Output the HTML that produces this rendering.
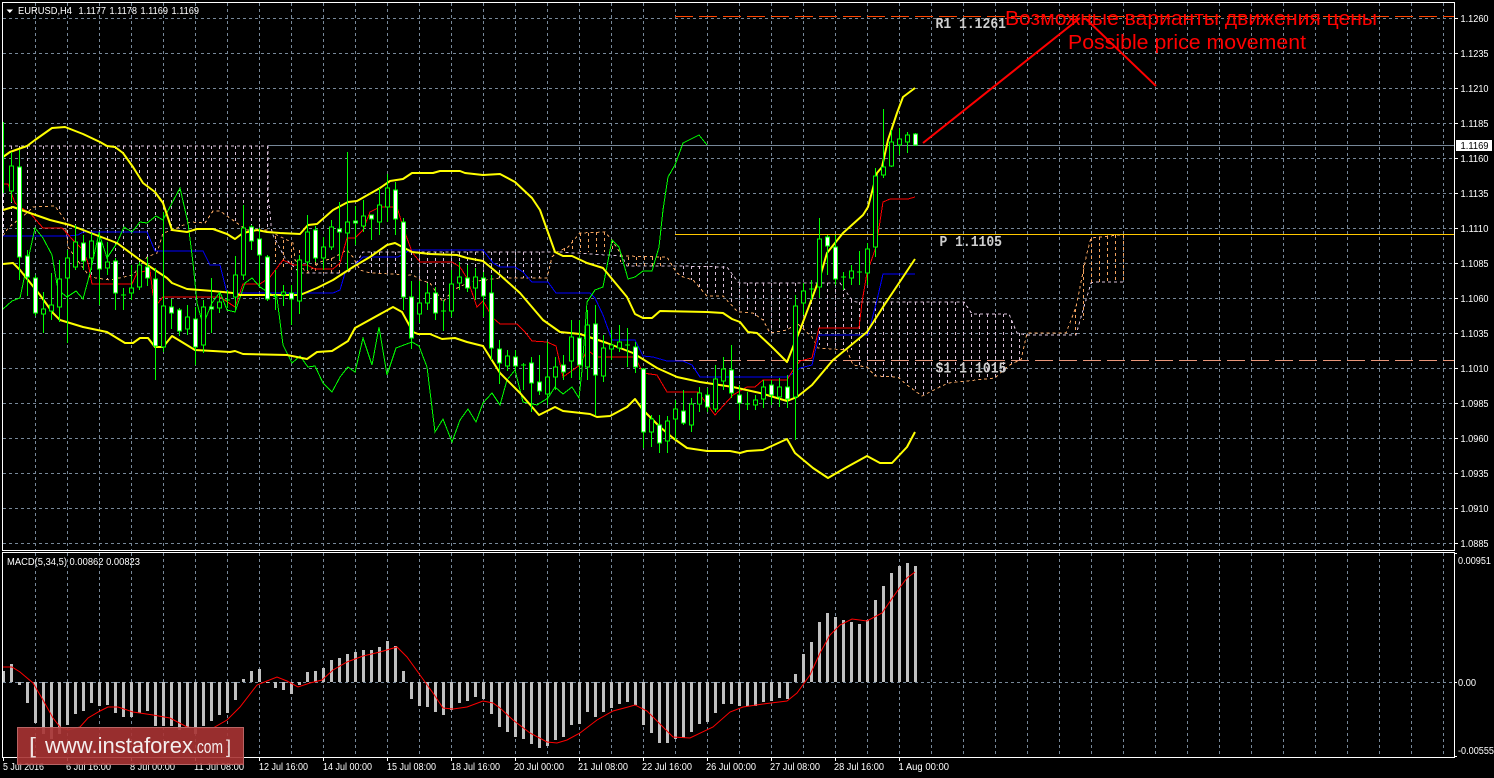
<!DOCTYPE html>
<html lang="en">
<head>
<meta charset="utf-8">
<title>EURUSD,H4</title>
<style>
html,body{margin:0;padding:0;background:#000;width:1494px;height:778px;overflow:hidden}
svg{display:block}
text{font-family:"Liberation Sans",sans-serif;font-size:10px;fill:#fff}
.m{font-family:"Liberation Mono",monospace;font-size:15px;font-weight:bold;fill:#cfcfcf}
.r{font-size:20px;fill:#f00}
.c{shape-rendering:crispEdges;fill:none}
.y{fill:none;stroke:#ff0;stroke-width:2;stroke-linejoin:round}
.t{fill:none;stroke-width:1;shape-rendering:crispEdges}
</style>
</head>
<body>
<svg width="1494" height="778" viewBox="0 0 1494 778" xmlns="http://www.w3.org/2000/svg">
<rect width="1494" height="778" fill="#000"/>

<!-- grid -->
<path class="c" stroke="#778899" stroke-dasharray="3 3" d="M3 18.5H1454M3 53.5H1454M3 88.5H1454M3 123.5H1454M3 158.5H1454M3 193.5H1454M3 228.5H1454M3 263.5H1454M3 298.5H1454M3 333.5H1454M3 368.5H1454M3 403.5H1454M3 438.5H1454M3 473.5H1454M3 508.5H1454M3 543.5H1454M3 682.5H1454"/>
<path class="c" stroke="#778899" stroke-dasharray="3 3" d="M35.5 3V550M67.5 3V550M99.5 3V550M131.5 3V550M163.5 3V550M195.5 3V550M227.5 3V550M259.5 3V550M291.5 3V550M323.5 3V550M355.5 3V550M387.5 3V550M419.5 3V550M451.5 3V550M483.5 3V550M515.5 3V550M547.5 3V550M579.5 3V550M611.5 3V550M643.5 3V550M675.5 3V550M707.5 3V550M739.5 3V550M771.5 3V550M803.5 3V550M835.5 3V550M867.5 3V550M899.5 3V550M931.5 3V550M963.5 3V550M995.5 3V550M1027.5 3V550M1059.5 3V550M1091.5 3V550M1123.5 3V550M1155.5 3V550M1187.5 3V550M1219.5 3V550M1251.5 3V550M1283.5 3V550M1315.5 3V550M1347.5 3V550M1379.5 3V550M1411.5 3V550M1443.5 3V550"/>
<path class="c" stroke="#778899" stroke-dasharray="3 3" d="M35.5 553V757M67.5 553V757M99.5 553V757M131.5 553V757M163.5 553V757M195.5 553V757M227.5 553V757M259.5 553V757M291.5 553V757M323.5 553V757M355.5 553V757M387.5 553V757M419.5 553V757M451.5 553V757M483.5 553V757M515.5 553V757M547.5 553V757M579.5 553V757M611.5 553V757M643.5 553V757M675.5 553V757M707.5 553V757M739.5 553V757M771.5 553V757M803.5 553V757M835.5 553V757M867.5 553V757M899.5 553V757M931.5 553V757M963.5 553V757M995.5 553V757M1027.5 553V757M1059.5 553V757M1091.5 553V757M1123.5 553V757M1155.5 553V757M1187.5 553V757M1219.5 553V757M1251.5 553V757M1283.5 553V757M1315.5 553V757M1347.5 553V757M1379.5 553V757M1411.5 553V757M1443.5 553V757"/>

<!-- bid line -->
<path class="c" stroke="#778899" d="M268 145.5H1454"/>

<!-- ichimoku hatch -->
<path class="c" stroke="#d8bfd8" stroke-dasharray="3 3" d="M3.5 146V236M11.5 146V225M19.5 146V218M27.5 146V213M35.5 146V207M43.5 146V206M51.5 146V206M59.5 146V212M67.5 146V240M75.5 146V257M83.5 146V270M91.5 146V277M99.5 146V279M107.5 146V280M115.5 146V279M123.5 146V278M131.5 146V276M139.5 146V265M147.5 146V257M155.5 146V254M163.5 146V233M171.5 146V230M179.5 146V226M187.5 146V222M195.5 146V222M203.5 146V223M211.5 146V212M219.5 146V211M227.5 146V215M235.5 146V222M243.5 146V227M251.5 146V230M259.5 146V230M267.5 146V230
M371.5 252V273M379.5 252V273M387.5 252V273M395.5 252V274M403.5 252V274M411.5 252V275M419.5 252V280M427.5 252V283M435.5 252V290M443.5 252V302M451.5 252V290M459.5 252V285M467.5 252V283M475.5 252V280M483.5 252V278M491.5 252V278M499.5 252V278M507.5 252V278M515.5 252V278M523.5 252V278M531.5 252V278M539.5 252V278
M683.5 266V277M691.5 266V280M699.5 266V288M707.5 266V296M715.5 266V296M723.5 266V296M731.5 275V305M739.5 283V312M747.5 283V313M755.5 283V316M763.5 283V320M771.5 283V333M779.5 283V331M787.5 283V330M795.5 283V325M803.5 283V330M811.5 283V337M819.5 283V345M827.5 283V349M835.5 283V349M843.5 288V350M851.5 300V350
M859.5 302V366M867.5 302V367M875.5 302V376M883.5 302V377M891.5 302V377M899.5 302V378M907.5 302V385M915.5 302V391M923.5 302V396M931.5 302V391M939.5 302V387M947.5 302V383M955.5 302V381M963.5 302V379M971.5 314V379M979.5 314V378M987.5 314V378M995.5 314V378M1003.5 314V372M1011.5 320V364M1019.5 333V361"/>
<path class="c" stroke="#f4a460" stroke-dasharray="3 3" d="M275.5 236V262M283.5 240V270M291.5 243V273M299.5 250V273M307.5 262V273M315.5 262V273M323.5 260V273M331.5 258V273M339.5 258V273M347.5 250V270M556.5 252V252M564.5 248V252M572.5 240V252M580.5 233V252M588.5 233V252M596.5 232V252M604.5 232V252M612.5 240V252M620.5 254V262M628.5 257V266M636.5 257V266M644.5 257V266M652.5 257V266M660.5 257V266M1075.5 309V335M1083.5 265V320M1091.5 238V283M1099.5 237V282M1107.5 236V282M1115.5 235V282M1123.5 235V282"/>

<!-- senkou B -->
<path class="t" stroke="#d8bfd8" stroke-dasharray="3 3" d="M3 146H268V195L272 233L285 258L300 273H347L353 268L363 252H540L560 252L622 256L627 266H677L727 267L738 282L740 283H840L852 300L856 302H964L972 314H1009L1017 333L1027 335H1076L1083 310L1091 283L1095 282H1123"/>
<!-- senkou A -->
<path class="t" stroke="#f4a460" stroke-dasharray="3 3" d="M3 236L8 228L27 213L33 207L55 206L65 220L68 247L75 257L90 277L110 280L133 275L147 257L157 253L163 233L173 230L190 222L205 223L213 211L220 211L237 223L247 230L267 230L273 233L293 243L295 260L307 273L320 262L333 258L347 250L353 257L360 270L370 273L413 275L420 280L430 283L443 302L453 290L470 282L500 278L547 278L552 257L557 252L568 247L580 233L605 232L612 240L622 256L667 257L673 267L677 273L683 277L693 280L707 296L723 296L738 312L753 313L763 320L770 333L787 330L797 323L812 337L818 348L847 350L853 365L867 367L875 376L898 377L907 385L922 396L948 383L995 378L1007 367L1013 363L1021 360L1027 333L1066 333L1076 307L1087 253L1091 238L1119 235L1123 235"/>

<!-- horizontal pivot lines -->
<path class="c" stroke="#ff4500" stroke-dasharray="18 6" d="M675 16.5H1454"/>
<path class="c" stroke="#ffc800" d="M675 234.5H1454"/>
<path class="c" stroke="#e9967a" stroke-dasharray="18 6" d="M675 360.5H1454"/>

<!-- kijun blue -->
<path class="t" stroke="#0000ff" d="M3 236H68L78 235L83 232H147L155 251H203L210 265H220L227 293H333L340 290L345 273L353 267L363 257H398L410 250H483L493 263L500 267H515L523 272L532 282H548L556 293H590L595 298L603 315L612 340H635L643 356L653 357L667 361H683L692 365L700 377H787L795 372L800 368L812 365L819 335H868L877 300L883 274H915"/>
<!-- tenkan red -->
<path class="t" stroke="#ff0000" d="M3 184H8L15 203L20 207L30 213L43 228H62L73 240L83 250L88 263L92 284H132L137 273L150 270L153 295L158 303L163 297H220L235 307L243 284H260L270 277L283 260L293 265H307L315 269H333L340 263L347 238H355L363 230L370 212L380 207H397L403 227L412 252L420 262H452L460 267L467 278L477 307L483 301L493 318L500 324H517L525 332L532 341L547 342L556 346L563 377L580 365L587 350L597 357H635L643 373L657 375L667 392H698L715 415L733 395L747 387H755L763 380H787L793 370L800 361L812 358L819 328H859L862 302L867 273L876 247L883 202L890 199H908L915 197"/>
<!-- chikou green -->
<path class="t" stroke="#00ff00" d="M3 309L12 301L20 298L28 260L35 228L43 238L52 255L58 290L67 297L76 291L83 299L90 273L99 233L107 258L117 243L124 227L132 232L140 222L147 223L156 216L163 220L180 188L188 223L193 263L197 303L203 325L212 303L220 292L227 310L235 312L245 283L252 278L260 287L277 298L283 345L292 363L300 356L308 367L315 366L323 383L332 392L340 377L348 367L355 372L363 338L372 365L379 327L387 375L396 348L412 342L419 346L427 367L435 432L443 419L452 442L460 420L468 409L476 422L483 403L492 393L500 405L507 380L515 370L523 402L537 405L548 398L555 387L563 394L572 387L579 398L582 370L587 302L595 290L603 287L612 240L619 247L628 279L635 277L643 271H652L659 247L663 210L668 177L675 165L683 143L699 135L707 145"/>

<!-- bollinger -->
<polyline class="y" points="3,157 10,152 27,146 35,140 52,128 65,127 83,134 100,142 107,146 115,147 123,153 133,167 143,183 155,192 163,203 172,230 187,232 197,229 213,229 227,234 235,239 243,233 257,230 267,232 280,233 300,234 308,225 317,224 333,210 348,202 357,201 380,188 390,181 403,179 412,173 433,173 440,171 460,171 465,173 483,175 500,174 515,182 532,198 540,210 555,252 563,256 572,256 587,263 603,268 627,297 635,314 643,318 652,318 660,311 707,312 723,313 732,319 740,322 748,332 757,333 772,347 787,362 793,347 800,330 820,277 827,253 843,233 863,215 868,207 877,173 882,167 888,140 897,113 903,97 915,88"/>
<polyline class="y" points="3,210 13,207 27,212 50,220 70,225 83,230 117,243 140,260 167,278 172,283 187,289 213,291 233,293 240,295 267,295 300,295 317,288 333,280 353,267 370,257 387,245 395,243 412,252 430,254 457,255 467,258 483,261 500,275 520,293 543,320 560,332 580,334 607,343 633,353 657,368 677,377 700,382 733,387 760,393 787,401 797,397 812,385 833,360 867,332 883,307 915,259"/>
<polyline class="y" points="3,264 13,263 20,270 40,295 53,313 60,320 83,327 107,332 125,343 133,343 140,338 148,338 155,347 163,347 172,336 195,350 213,351 230,352 235,351 243,354 287,355 307,359 317,352 332,351 348,341 355,328 393,307 402,312 413,332 418,334 430,334 442,339 455,338 467,342 483,346 500,373 520,393 539,415 555,407 563,411 590,414 597,417 610,416 627,407 635,399 643,410 660,427 673,438 687,448 707,451 730,451 740,453 747,451 763,450 787,439 795,453 813,468 828,478 847,467 867,456 880,463 892,463 907,447 915,432"/>

<!-- wicks -->
<path class="c" stroke="#00ff00" d="M3.5 122V193M11.5 152V202M19.5 150V280M27.5 250V296M35.5 275V316M43.5 292V333M51.5 273V320M59.5 260V322M67.5 250V343M75.5 225V270M83.5 235V270M91.5 233V270M99.5 233V305M107.5 242V275M115.5 258V310M123.5 288V310M121 295h5M131.5 265V300M139.5 262V290M147.5 257V286M155.5 268V380M163.5 212V352M171.5 299V329M179.5 308V336M187.5 305V335M195.5 307V365M203.5 300V353M211.5 278V333M219.5 292V313M227.5 290V308M225 300h5M235.5 256V310M243.5 205V280M251.5 225V250M259.5 228V287M267.5 255V301M275.5 270V310M273 296h5M283.5 285V306M291.5 285V325M299.5 255V314M307.5 215V270M315.5 226V262M323.5 237V270M331.5 220V250M339.5 202V260M347.5 152V270M355.5 206V245M363.5 200V232M371.5 215V240M379.5 188V235M387.5 174V222M395.5 182V235M403.5 218V310M411.5 281V349M419.5 281V323M427.5 283V310M435.5 287V320M443.5 300V331M441 311h5M451.5 270V317M459.5 262V290M467.5 265V292M475.5 268V300M483.5 272V317M491.5 275V360M499.5 340V384M507.5 350V371M515.5 350V370M523.5 363V390M521 365h5M531.5 357V412M539.5 355V395M547.5 342V405M555.5 357V390M563.5 355V380M571.5 320V378M579.5 320V380M587.5 310V380M595.5 305V415M603.5 335V382M611.5 330V360M619.5 325V352M627.5 328V367M625 345h5M635.5 342V373M643.5 368V448M651.5 415V447M659.5 415V453M667.5 416V453M675.5 400V440M683.5 390V425M691.5 398V432M699.5 387V412M707.5 388V412M715.5 365V412M723.5 357V390M731.5 345V398M739.5 385V420M747.5 392V410M745 404h5M755.5 395V410M763.5 380V408M771.5 380V405M779.5 378V407M787.5 375V408M795.5 295V440M803.5 283V315M811.5 280V300M809 289h5M819.5 218V298M827.5 235V275M835.5 235V285M843.5 272V290M841 277h5M851.5 265V285M859.5 251V285M857 272h5M867.5 243V285M875.5 168V257M883.5 109V178M891.5 130V167M899.5 128V155M907.5 132V153M915.5 133V146"/>
<!-- up bodies -->
<path style="shape-rendering:crispEdges" fill="#000" stroke="#00ff00" d="M9.5 166h4v25h-4zM41.5 309h4v5h-4zM49.5 305h4v6h-4zM57.5 279h4v28h-4zM65.5 258h4v20h-4zM73.5 242h4v25h-4zM89.5 241h4v17h-4zM105.5 262h4v6h-4zM129.5 288h4v5h-4zM137.5 265h4v22h-4zM161.5 306h4v41h-4zM185.5 317h4v12h-4zM201.5 307h4v38h-4zM217.5 302h4v6h-4zM233.5 275h4v22h-4zM241.5 228h4v47h-4zM281.5 292h4v3h-4zM297.5 260h4v41h-4zM305.5 232h4v30h-4zM321.5 247h4v11h-4zM329.5 227h4v20h-4zM345.5 222h4v11h-4zM361.5 216h4v10h-4zM377.5 205h4v17h-4zM385.5 188h4v19h-4zM417.5 303h4v11h-4zM425.5 293h4v10h-4zM449.5 284h4v27h-4zM457.5 277h4v6h-4zM473.5 277h4v11h-4zM505.5 356h4v10h-4zM545.5 377h4v17h-4zM553.5 367h4v10h-4zM569.5 337h4v24h-4zM585.5 325h4v42h-4zM601.5 348h4v28h-4zM609.5 345h4v4h-4zM617.5 342h4v6h-4zM649.5 419h4v13h-4zM665.5 421h4v20h-4zM673.5 409h4v10h-4zM689.5 404h4v21h-4zM697.5 393h4v11h-4zM713.5 379h4v30h-4zM721.5 369h4v12h-4zM753.5 400h4v5h-4zM761.5 387h4v12h-4zM777.5 387h4v10h-4zM793.5 306h4v91h-4zM801.5 291h4v12h-4zM817.5 239h4v48h-4zM849.5 271h4v7h-4zM865.5 249h4v24h-4zM873.5 176h4v71h-4zM881.5 167h4v8h-4zM889.5 142h4v24h-4zM897.5 139h4v6h-4zM905.5 135h4v7h-4z"/>
<!-- down bodies -->
<path style="shape-rendering:crispEdges" fill="#fff" stroke="#00ff00" d="M17.5 167h4v90h-4zM25.5 256h4v21h-4zM33.5 278h4v35h-4zM81.5 243h4v18h-4zM97.5 242h4v27h-4zM113.5 261h4v32h-4zM145.5 267h4v11h-4zM153.5 279h4v67h-4zM169.5 307h4v6h-4zM177.5 310h4v21h-4zM193.5 319h4v28h-4zM209.5 307h4v2h-4zM249.5 227h4v14h-4zM257.5 239h4v16h-4zM265.5 257h4v42h-4zM289.5 293h4v6h-4zM313.5 230h4v28h-4zM337.5 229h4v3h-4zM353.5 221h4v2h-4zM369.5 215h4v4h-4zM393.5 190h4v29h-4zM401.5 222h4v75h-4zM409.5 297h4v41h-4zM433.5 293h4v20h-4zM465.5 278h4v10h-4zM481.5 278h4v18h-4zM489.5 293h4v55h-4zM497.5 349h4v14h-4zM513.5 357h4v9h-4zM529.5 363h4v20h-4zM537.5 382h4v9h-4zM561.5 365h4v7h-4zM577.5 338h4v27h-4zM593.5 324h4v51h-4zM633.5 347h4v20h-4zM641.5 369h4v63h-4zM657.5 425h4v18h-4zM681.5 411h4v12h-4zM705.5 395h4v12h-4zM729.5 370h4v23h-4zM737.5 395h4v8h-4zM769.5 385h4v10h-4zM785.5 387h4v12h-4zM825.5 237h4v9h-4zM833.5 247h4v32h-4zM913.5 134h4v11h-4z"/>

<!-- red arrows -->
<path fill="none" stroke="#f00" stroke-width="2" d="M923 143L1080 18M1085 18L1156 86"/>

<!-- macd histogram -->
<path class="c" stroke="#c0c0c0" stroke-width="3" d="M3.5 682V671M11.5 682V664M19.5 682V685M27.5 682V703M35.5 682V723M43.5 682V734M51.5 682V739M59.5 682V734M67.5 682V725M75.5 682V714M83.5 682V711M91.5 682V703M99.5 682V706M107.5 682V705M115.5 682V713M123.5 682V717M131.5 682V717M139.5 682V713M147.5 682V711M155.5 682V726M163.5 682V726M171.5 682V726M179.5 682V730M187.5 682V727M195.5 682V734M203.5 682V726M211.5 682V721M219.5 682V715M227.5 682V713M235.5 682V700M243.5 682V679M251.5 682V671M259.5 682V669M267.5 682V683M275.5 682V688M283.5 682V690M291.5 682V694M299.5 682V685M307.5 682V672M315.5 682V671M323.5 682V668M331.5 682V660M339.5 682V658M347.5 682V654M355.5 682V652M363.5 682V650M371.5 682V650M379.5 682V647M387.5 682V641M395.5 682V646M403.5 682V671M411.5 682V699M419.5 682V706M427.5 682V707M435.5 682V712M443.5 682V715M451.5 682V710M459.5 682V703M467.5 682V701M475.5 682V697M483.5 682V699M491.5 682V714M499.5 682V727M507.5 682V732M515.5 682V737M523.5 682V739M531.5 682V744M539.5 682V748M547.5 682V746M555.5 682V740M563.5 682V737M571.5 682V725M579.5 682V724M587.5 682V712M595.5 682V717M603.5 682V712M611.5 682V708M619.5 682V704M627.5 682V702M635.5 682V705M643.5 682V725M651.5 682V733M659.5 682V743M667.5 682V743M675.5 682V739M683.5 682V738M691.5 682V732M699.5 682V724M707.5 682V722M715.5 682V713M723.5 682V704M731.5 682V704M739.5 682V706M747.5 682V706M755.5 682V706M763.5 682V702M771.5 682V701M779.5 682V698M787.5 682V699M795.5 682V674M803.5 682V654M811.5 682V642M819.5 682V622M827.5 682V613M835.5 682V617M843.5 682V620M851.5 682V622M859.5 682V624M867.5 682V620M875.5 682V600M883.5 682V586M891.5 682V573M899.5 682V566M907.5 682V563M915.5 682V566"/>
<!-- macd signal -->
<polyline fill="none" stroke="#f00" stroke-width="1" points="3,667 12,667 20,672 33,683 43,700 53,718 60,727 68,730 80,727 88,718 100,711 108,707 118,707 133,712 153,715 170,718 187,727 197,728 213,728 227,720 240,707 257,685 267,681 277,677 287,681 298,687 310,683 322,680 333,670 347,662 363,656 380,652 397,647 407,657 420,675 433,693 443,708 453,709 467,707 483,701 493,703 500,708 513,720 530,733 547,742 557,743 567,740 580,733 597,720 613,711 628,707 635,705 647,711 660,724 673,737 690,738 713,727 730,712 743,707 763,704 787,701 797,693 810,675 820,653 830,635 840,625 852,619 867,621 882,613 898,590 907,578 915,572"/>

<!-- frames -->
<path class="c" stroke="#fff" d="M2.5 3V550.5H1454.5V2.5H2M2.5 552.5V757.5H1454.5V552.5H2"/>
<!-- ticks -->
<path class="c" stroke="#fff" d="M1455 18.5h3M1455 53.5h3M1455 88.5h3M1455 123.5h3M1455 158.5h3M1455 193.5h3M1455 228.5h3M1455 263.5h3M1455 298.5h3M1455 333.5h3M1455 368.5h3M1455 403.5h3M1455 438.5h3M1455 473.5h3M1455 508.5h3M1455 543.5h3M1455 553.5h2M1455 682.5h2M1455 756.5h2M3.5 758v3M67.5 758v3M131.5 758v3M195.5 758v3M259.5 758v3M323.5 758v3M387.5 758v3M451.5 758v3M515.5 758v3M579.5 758v3M643.5 758v3M707.5 758v3M771.5 758v3M835.5 758v3M899.5 758v3"/>

<!-- header -->
<path d="M6.5 9.5h6.5l-3.2 3.5z" fill="#fff"/>
<text x="18" y="14" textLength="54" lengthAdjust="spacingAndGlyphs">EURUSD,H4</text>
<text x="78.5" y="14" textLength="27.5" lengthAdjust="spacingAndGlyphs">1.1177</text>
<text x="109.5" y="14" textLength="27.5" lengthAdjust="spacingAndGlyphs">1.1178</text>
<text x="140.5" y="14" textLength="27.5" lengthAdjust="spacingAndGlyphs">1.1169</text>
<text x="171.5" y="14" textLength="27.5" lengthAdjust="spacingAndGlyphs">1.1169</text>
<text x="7" y="565" textLength="133" lengthAdjust="spacingAndGlyphs">MACD(5,34,5) 0.00862 0.00823</text>

<!-- pivot labels -->
<text class="m" x="935.5" y="28" textLength="70.5" lengthAdjust="spacingAndGlyphs">R1 1.1261</text>
<text class="m" x="939.5" y="246" textLength="62.5" lengthAdjust="spacingAndGlyphs">P 1.1105</text>
<text class="m" x="935.5" y="372.5" textLength="71" lengthAdjust="spacingAndGlyphs">S1 1.1015</text>

<!-- red text -->
<text class="r" x="1005" y="25" textLength="372" lengthAdjust="spacingAndGlyphs">Возможные варианты движения цены</text>
<text class="r" x="1068" y="49" textLength="238" lengthAdjust="spacingAndGlyphs">Possible price movement</text>

<!-- price axis -->
<g>
<text x="1460.5" y="22" textLength="28" lengthAdjust="spacingAndGlyphs">1.1260</text>
<text x="1460.5" y="57" textLength="28" lengthAdjust="spacingAndGlyphs">1.1235</text>
<text x="1460.5" y="92" textLength="28" lengthAdjust="spacingAndGlyphs">1.1210</text>
<text x="1460.5" y="127" textLength="28" lengthAdjust="spacingAndGlyphs">1.1185</text>
<text x="1460.5" y="162" textLength="28" lengthAdjust="spacingAndGlyphs">1.1160</text>
<text x="1460.5" y="197" textLength="28" lengthAdjust="spacingAndGlyphs">1.1135</text>
<text x="1460.5" y="232" textLength="28" lengthAdjust="spacingAndGlyphs">1.1110</text>
<text x="1460.5" y="267" textLength="28" lengthAdjust="spacingAndGlyphs">1.1085</text>
<text x="1460.5" y="302" textLength="28" lengthAdjust="spacingAndGlyphs">1.1060</text>
<text x="1460.5" y="337" textLength="28" lengthAdjust="spacingAndGlyphs">1.1035</text>
<text x="1460.5" y="372" textLength="28" lengthAdjust="spacingAndGlyphs">1.1010</text>
<text x="1460.5" y="407" textLength="28" lengthAdjust="spacingAndGlyphs">1.0985</text>
<text x="1460.5" y="442" textLength="28" lengthAdjust="spacingAndGlyphs">1.0960</text>
<text x="1460.5" y="477" textLength="28" lengthAdjust="spacingAndGlyphs">1.0935</text>
<text x="1460.5" y="512" textLength="28" lengthAdjust="spacingAndGlyphs">1.0910</text>
<text x="1460.5" y="547" textLength="28" lengthAdjust="spacingAndGlyphs">1.0885</text>
<rect x="1456" y="140" width="36" height="11" fill="#fff"/>
<text x="1460.5" y="149" textLength="28" lengthAdjust="spacingAndGlyphs" style="fill:#000">1.1169</text>
<text x="1458" y="564" textLength="33" lengthAdjust="spacingAndGlyphs">0.00951</text>
<text x="1458" y="686" textLength="18" lengthAdjust="spacingAndGlyphs">0.00</text>
<text x="1458" y="754" textLength="36" lengthAdjust="spacingAndGlyphs">-0.00555</text>
</g>

<!-- time axis -->
<g>
<text x="3" y="770" textLength="41" lengthAdjust="spacingAndGlyphs">5 Jul 2016</text>
<text x="66" y="770" textLength="45" lengthAdjust="spacingAndGlyphs">6 Jul 16:00</text>
<text x="130" y="770" textLength="45" lengthAdjust="spacingAndGlyphs">8 Jul 00:00</text>
<text x="194" y="770" textLength="50" lengthAdjust="spacingAndGlyphs">11 Jul 08:00</text>
<text x="259" y="770" textLength="49" lengthAdjust="spacingAndGlyphs">12 Jul 16:00</text>
<text x="323" y="770" textLength="49" lengthAdjust="spacingAndGlyphs">14 Jul 00:00</text>
<text x="387" y="770" textLength="49" lengthAdjust="spacingAndGlyphs">15 Jul 08:00</text>
<text x="451" y="770" textLength="49" lengthAdjust="spacingAndGlyphs">18 Jul 16:00</text>
<text x="514" y="770" textLength="50" lengthAdjust="spacingAndGlyphs">20 Jul 00:00</text>
<text x="578" y="770" textLength="50" lengthAdjust="spacingAndGlyphs">21 Jul 08:00</text>
<text x="642" y="770" textLength="50" lengthAdjust="spacingAndGlyphs">22 Jul 16:00</text>
<text x="706" y="770" textLength="50" lengthAdjust="spacingAndGlyphs">26 Jul 00:00</text>
<text x="770" y="770" textLength="50" lengthAdjust="spacingAndGlyphs">27 Jul 08:00</text>
<text x="834" y="770" textLength="50" lengthAdjust="spacingAndGlyphs">28 Jul 16:00</text>
<text x="898.5" y="770" textLength="50.5" lengthAdjust="spacingAndGlyphs">1 Aug 00:00</text>
</g>

<!-- logo -->
<rect x="17.500" y="727.500" width="226" height="37" fill="#a83333" fill-opacity=".9" stroke="#b96464" stroke-width="1"/>
<text x="29" y="753" style="font-size:22px;fill:#f0e4e4" textLength="7" lengthAdjust="spacingAndGlyphs">[</text>
<text x="45" y="753" style="font-size:22px;fill:#f4eeee" textLength="148" lengthAdjust="spacingAndGlyphs">www.instaforex</text>
<text x="193" y="753" style="font-size:18px;fill:#f4eeee" textLength="30" lengthAdjust="spacingAndGlyphs">.com</text>
<text x="226" y="753" style="font-size:18px;fill:#f0e4e4" textLength="5" lengthAdjust="spacingAndGlyphs">]</text>
</svg>
</body>
</html>
